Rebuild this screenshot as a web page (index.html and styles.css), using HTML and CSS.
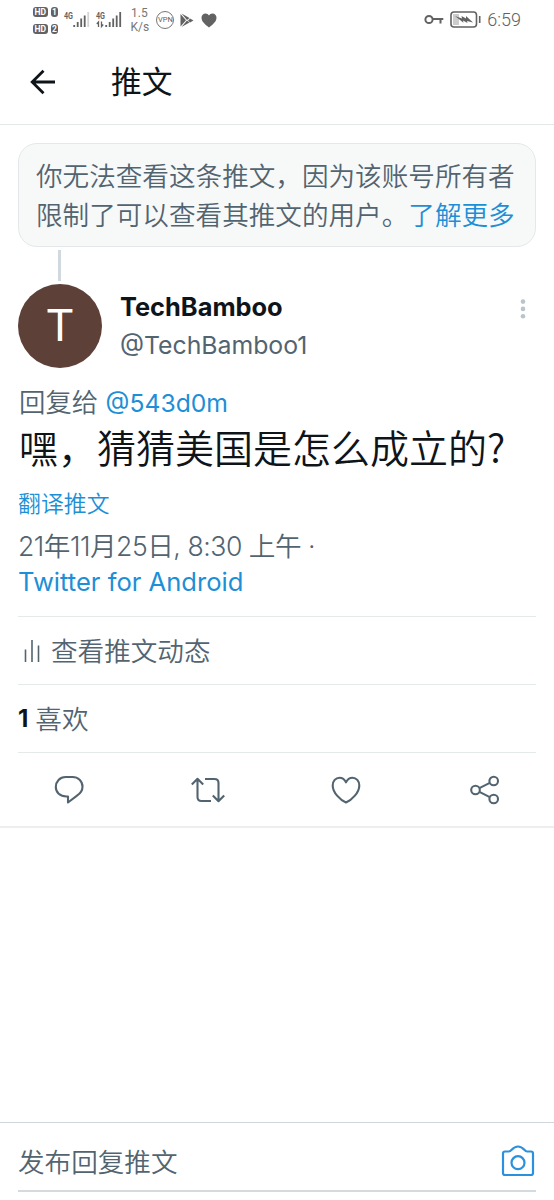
FILE: index.html
```html
<!DOCTYPE html>
<html lang="zh-CN">
<head>
    <meta charset="UTF-8">
    <meta name="viewport" content="width=device-width, initial-scale=1.0">
    <title>推文</title>
    <link rel="stylesheet" href="styles.css">
</head>
<body>
    <div class="status-bar">
        <div class="hd">
            <div class="hd-row"><span>HD</span><span>1</span></div>
            <div class="hd-row"><span>HD</span><span>2</span></div>
        </div>
        <svg class="signal" width="26" height="20" viewBox="0 0 26 20">
            <text x="0" y="9" textLength="9" lengthAdjust="spacingAndGlyphs">4G</text>
            <path d="M10.2 15v2M13.7 12v5M17.2 8.5v8.5M20.7 5.500v11.500" />
            <path class="faint" d="M24.2 2v15" />
        </svg>
        <svg class="signal" width="26" height="20" viewBox="0 0 26 20">
            <text x="0" y="9" textLength="9" lengthAdjust="spacingAndGlyphs">4G</text>
            <path class="thin" d="M2.500 17v-5l-1.700 2M5.500 11.500v5l1.700-2" />
            <path d="M10.2 15v2M13.7 12v5M17.2 8.500v8.500M20.7 5.500v11.500M24.2 2v15" />
        </svg>
        <div class="speed">1.5<br>K/s</div>
        <div class="vpn">VPN</div>
        <svg class="play" width="14" height="15" viewBox="0 0 14 15">
            <path d="M.5 1v12.500L6 7.200z M1.500.5l8 4.500-2.500 2z M1.500 14l8-4.500-2.500-2z M10 5.500l3.500 2-3.500 2-2-2z" />
        </svg>
        <svg class="fav" width="16" height="15" viewBox="0 0 16 15">
            <path d="M8 14.500C4 11.500.5 8.500.5 4.800.5 2.200 2.300.5 4.500.5 6 .5 7.300 1.300 8 2.500 8.700 1.300 10 .5 11.500.5c2.200 0 4 1.700 4 4.300 0 3.700-3.500 6.700-7.500 9.700z" />
        </svg>
        <svg class="key" width="20" height="12" viewBox="0 0 20 12">
            <circle cx="5" cy="5.500" r="3.600" />
            <path d="M8.600 5h10.700M16.500 5v4.500" />
        </svg>
        <svg class="battery" width="32" height="18" viewBox="0 0 32 18">
            <rect class="level" x="3" y="3" width="6" height="11" />
            <rect class="shell" x="1" y="1" width="25.500" height="15" rx="3" />
            <path class="bolt" d="M5 5l7 2.500-.5-2.500 4.500 2.500v-2.500l7 6.500-6-1.500.5 2-4.500-2.500.5 2.200z" />
            <path class="shell" d="M29.700 5v7" />
        </svg>
        <div class="clock">6:59</div>
    </div>

    <header class="top-bar">
        <svg width="26" height="26" viewBox="0 0 26 26">
            <path d="M25 13H2M13.500 1.800L2.200 13l11.300 11.200" />
        </svg>
        <h1>推文</h1>
    </header>

    <main class="thread">
        <div class="notice">你无法查看这条推文，因为该账号所有者限制了可以查看其推文的用户。<a>了解更多</a></div>
        <div class="connector"></div>

        <div class="author">
            <div class="avatar">T</div>
            <div class="names">
                <div class="name">TechBamboo</div>
                <div class="handle">@TechBamboo1</div>
            </div>
            <svg class="more" width="6" height="20" viewBox="0 0 6 20">
                <circle cx="3" cy="2.600" r="2.300" />
                <circle cx="3" cy="9.900" r="2.300" />
                <circle cx="3" cy="17.200" r="2.300" />
            </svg>
        </div>

        <div class="reply-to">回复给 <a>@543d0m</a></div>
        <div class="tweet-text">嘿，猜猜美国是怎么成立的?</div>
        <div class="translate"><a>翻译推文</a></div>
        <div class="date">21年11月25日, 8:30 上午 ·</div>
        <div class="source"><a>Twitter for Android</a></div>

        <div class="row activity">
            <svg width="16" height="24" viewBox="0 0 16 24">
                <path d="M1.500 10.500V23M8 1v22M14.500 6.500V23" />
            </svg>
            <span>查看推文动态</span>
        </div>
        <div class="row likes"><b>1</b><span>喜欢</span></div>
        <div class="row actions">
            <svg width="36" height="32" viewBox="0 0 36 32">
                <path d="M14.500 3h7c5.700 0 10 4 10 9.700 0 4-2.200 6.700-5.500 9L17 28.500v-6h-1.500C9 22.500 4.800 18.500 4.800 13S8.800 3 14.500 3z" />
            </svg>
            <svg width="36" height="32" viewBox="0 0 36 32">
                <path d="M1.800 10.500L7.500 4.800l5.700 5.700M7.500 5v18q0 4 4 4H21M15 5h9.500q4 0 4 4v18M22.800 21.500l5.700 5.700 5.700-5.700" />
            </svg>
            <svg width="36" height="32" viewBox="0 0 36 32">
                <path d="M18 28.500C12 26 4.700 18.500 4.700 11.500 4.700 7 7.700 3.700 11.500 3.700c3 0 5.200 1.800 6.500 4.600 1.300-2.800 3.500-4.600 6.500-4.600 3.800 0 6.800 3.300 6.800 7.800C31.300 18.500 24 26 18 28.500z" />
            </svg>
            <svg width="36" height="32" viewBox="0 0 36 32">
                <circle cx="8.500" cy="16" r="4.300" />
                <circle cx="26.700" cy="7" r="4.300" />
                <circle cx="26.700" cy="25" r="4.300" />
                <path d="M12.400 14.100l10.400-5.200M12.400 17.900l10.400 5.200" />
            </svg>
        </div>
    </main>

    <footer class="composer">
        <div class="composer-field">
            <span>发布回复推文</span>
            <svg width="34" height="32" viewBox="0 0 34 32">
                <path d="M4 6.500h4c2.500 0 3.500-5 9-5s6.500 5 9 5h4q2 0 2 2v19.500q0 2-2 2H4q-2 0-2-2V8.500q0-2 2-2z" />
                <circle cx="17" cy="17.700" r="6.500" />
            </svg>
        </div>
    </footer>
</body>
</html>
```
FILE: styles.css
```css
* {
    box-sizing: border-box;
}

body {
    margin: 0;
    height: 1200px;
    display: flex;
    flex-direction: column;
    overflow: hidden;
    background: #fff;
    color: #536471;
    font-family: Inter, "Noto Sans CJK SC", sans-serif;
    font-size: 26.6px;
    font-weight: 350;
}

svg {
    display: block;
    flex: none;
    fill: none;
}

a {
    color: #1d8fd6;
}

/* Status bar */
.status-bar {
    height: 40px;
    padding: 0 33px;
    display: flex;
    align-items: center;
    color: #626262;
}

.hd {
    display: flex;
    flex-direction: column;
    gap: 7px;
}

.hd-row {
    display: flex;
    gap: 3px;
}

.hd-row span {
    height: 10px;
    padding: 0 1.5px;
    border-radius: 3px;
    background: #626262;
    color: #fff;
    font: bold 8.5px/10px Roboto, sans-serif;
}

.signal {
    margin-left: 6px;
    stroke: #626262;
    stroke-width: 1.8;
}

.signal text {
    fill: #626262;
    stroke: none;
    font: bold 9.5px Roboto, sans-serif;
}

.signal .faint {
    stroke: #d4d4d4;
}

.signal .thin {
    stroke-width: 1.3;
}

.speed {
    width: 18px;
    margin-left: 8px;
    color: #777;
    font: 12px/14px Roboto, sans-serif;
    text-align: center;
}

.vpn {
    width: 18px;
    height: 18px;
    margin-left: 8px;
    border: 1px solid #777;
    border-radius: 50%;
    font: 7.5px/16px Roboto, sans-serif;
    display: flex;
    justify-content: center;
}

.play {
    margin-left: 6px;
    fill: #626262;
}

.fav {
    margin-left: 7px;
    fill: #626262;
}

.key {
    margin-left: auto;
    stroke: #626262;
    stroke-width: 2;
}

.battery {
    margin-left: 6px;
}

.battery .shell {
    stroke: #626262;
    stroke-width: 1.6;
}

.battery .level {
    fill: #ccc;
}

.battery .bolt {
    fill: #626262;
}

.clock {
    margin-left: 5px;
    font: 350 18px/20px Roboto, sans-serif;
}

/* Header */
.top-bar {
    height: 85px;
    padding-left: 30px;
    display: flex;
    align-items: center;
    gap: 55px;
    border-bottom: 1px solid #e4e7e8;
    color: #0f1419;
}

.top-bar svg {
    stroke: #0f1419;
    stroke-width: 2.8;
}

h1 {
    margin: 0;
    font-size: 30.8px;
    line-height: 40px;
    font-weight: 400;
}

/* Tweet */
.thread {
    padding: 18px 18px 0;
    border-bottom: 2px solid #eceeef;
    height: 703px;
}

.notice {
    height: 104px;
    padding: 13px 17px;
    border: 1px solid #e3e8ea;
    border-radius: 19px;
    background: #f7f9f9;
    line-height: 38.5px;
}

.connector {
    width: 3px;
    height: 31px;
    margin: 3px 0 3px 40px;
    background: #cfd9de;
}

.author {
    display: flex;
    height: 84px;
}

.avatar {
    width: 84px;
    height: 84px;
    border-radius: 50%;
    background: #5d4037;
    color: #fff;
    font: 45px/84px Roboto, sans-serif;
    text-align: center;
}

.names {
    margin-left: 18px;
    padding-top: 4px;
    line-height: 38px;
}

.name {
    color: #0f1419;
    font-size: 25.4px;
    font-weight: 700;
}

.handle {
    font-size: 24.8px;
    font-weight: 400;
}

.more {
    margin: 15px 10px 0 auto;
    fill: #b9c5cc;
}

.reply-to {
    margin-top: 15px;
    padding-left: 1px;
    font-size: 26.4px;
    line-height: 38px;
}

.reply-to a {
    font-size: 24.7px;
    font-weight: 400;
}

.tweet-text {
    margin-top: -3px;
    padding-left: 1px;
    color: #0f1419;
    font-family: "Noto Sans CJK SC", sans-serif;
    font-size: 39px;
    line-height: 54px;
    white-space: nowrap;
}

.translate {
    margin-top: 13px;
    font-size: 22.9px;
    line-height: 36px;
}

.date {
    margin-top: 6px;
    line-height: 36px;
    letter-spacing: -0.47px;
}

.source {
    line-height: 36px;
    font-size: 25.6px;
    font-weight: 400;
}

.row {
    height: 68px;
    border-top: 1px solid #e4e9ea;
    display: flex;
    align-items: center;
}

.row span {
    margin-top: -2px;
}

.activity {
    margin-top: 16px;
}

.activity svg {
    margin: 0 11px 0 6px;
    stroke: #536471;
    stroke-width: 1.6;
}

.likes b {
    margin-right: 7px;
    color: #0f1419;
    font-size: 24px;
    font-weight: 700;
}

.actions {
    height: 74px;
    padding: 0 33px;
    justify-content: space-between;
}

.actions svg {
    stroke: #536471;
    stroke-width: 2.1;
    stroke-linejoin: round;
}

/* Reply box */
.composer {
    margin-top: auto;
    height: 78px;
    padding: 0 18px;
    border-top: 1px solid #cfd6dc;
}

.composer-field {
    height: 69px;
    padding-top: 8px;
    border-bottom: 2px solid #d3dae0;
    display: flex;
    align-items: center;
    justify-content: space-between;
}

.composer-field svg {
    margin-right: 1px;
    stroke: #2c91dc;
    stroke-width: 2.2;
}
```
